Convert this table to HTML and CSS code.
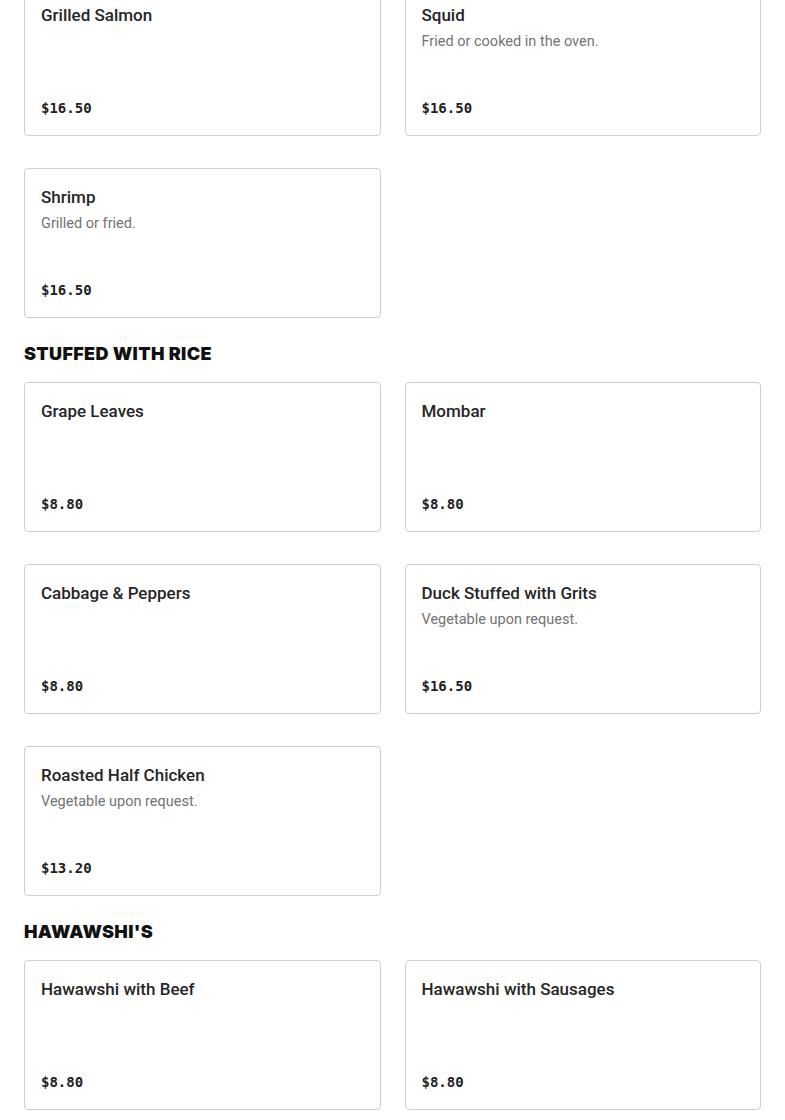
FILE: index.html
```html
<!DOCTYPE html>
<html lang="en">
<head>
<meta charset="utf-8">
<link rel="stylesheet" href="styles.css">
<title>Menu</title>
</head>
<body>
<main class="menu">
  <section class="section first">
    <div class="grid">
      <div class="card"><div class="name">Grilled Salmon</div><div class="price">$16.50</div></div>
      <div class="card"><div class="name">Squid</div><div class="desc">Fried or cooked in the oven.</div><div class="price">$16.50</div></div>
      <div class="card"><div class="name">Shrimp</div><div class="desc">Grilled or fried.</div><div class="price">$16.50</div></div>
    </div>
  </section>
  <section class="section">
    <h2 class="heading">STUFFED WITH RICE</h2>
    <div class="grid">
      <div class="card"><div class="name">Grape Leaves</div><div class="price">$8.80</div></div>
      <div class="card"><div class="name">Mombar</div><div class="price">$8.80</div></div>
      <div class="card"><div class="name">Cabbage &amp; Peppers</div><div class="price">$8.80</div></div>
      <div class="card"><div class="name">Duck Stuffed with Grits</div><div class="desc">Vegetable upon request.</div><div class="price">$16.50</div></div>
      <div class="card"><div class="name">Roasted Half Chicken</div><div class="desc">Vegetable upon request.</div><div class="price">$13.20</div></div>
    </div>
  </section>
  <section class="section">
    <h2 class="heading">HAWAWSHI'S</h2>
    <div class="grid">
      <div class="card"><div class="name">Hawawshi with Beef</div><div class="price">$8.80</div></div>
      <div class="card"><div class="name">Hawawshi with Sausages</div><div class="price">$8.80</div></div>
    </div>
  </section>
</main>
</body>
</html>
```

FILE: styles.css
```css
* { box-sizing: border-box; }
html, body { margin: 0; padding: 0; background: #fff; }
body { font-family: Roboto, "Noto Sans", sans-serif; color: #222; overflow: hidden; }
.menu { padding: 0 24px; margin-top: -14px; }
.section { margin-bottom: 24px; }
.heading {
  margin: 0 0 16px;
  font-family: Inter, sans-serif;
  font-weight: 900;
  font-size: 18px;
  line-height: 24px;
  color: #111;
  letter-spacing: 0.35px;
}
.grid {
  display: grid;
  grid-template-columns: 1fr 1fr;
  column-gap: 24px;
  row-gap: 32px;
}
.card {
  height: 150px;
  border: 1px solid #cfcfcf;
  border-radius: 4px;
  padding: 16px 16px 17px;
  display: flex;
  flex-direction: column;
}
.name {
  font-size: 17px;
  line-height: 24px;
  font-weight: 500;
  color: #262626;
}
.desc {
  margin-top: 5px;
  font-size: 14.5px;
  line-height: 20px;
  color: #737373;
}
.price {
  margin-top: auto;
  font-family: "DejaVu Sans Mono", "Liberation Mono", monospace;
  font-weight: bold;
  font-size: 14px;
  line-height: 20px;
  color: #222;
}
```
